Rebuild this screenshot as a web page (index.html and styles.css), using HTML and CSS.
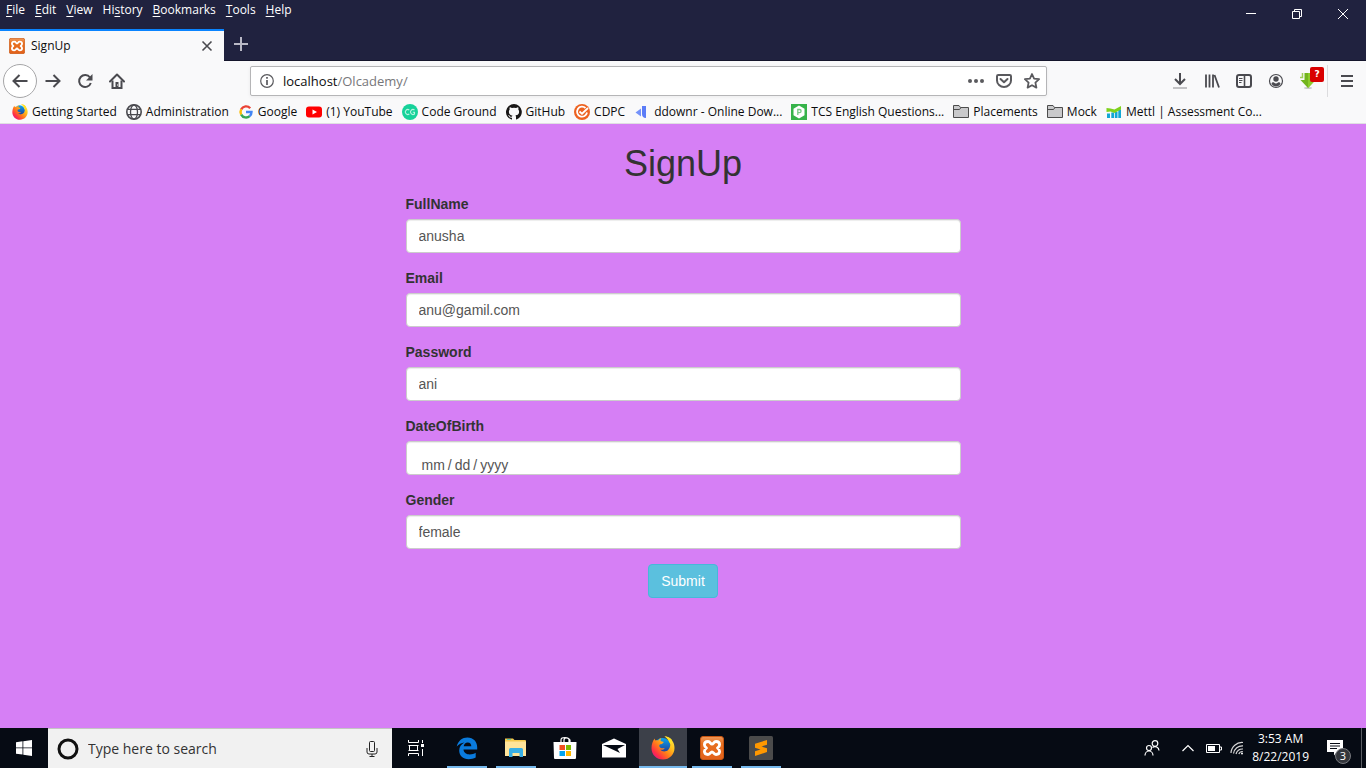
FILE: index.html
```html
<!DOCTYPE html>
<html lang="en">
<head>
<meta charset="utf-8">
<meta name="viewport" content="width=device-width, initial-scale=1">
<title>SignUp</title>
<link rel="stylesheet" href="styles.css">
</head>
<body class="desktop">
<svg class="defs" width="0" height="0" aria-hidden="true">
  <defs>
    <linearGradient id="fire" x1="1" y1="0" x2="0.1" y2=".9"><stop offset="0" stop-color="#fff44f"/><stop offset=".35" stop-color="#ffc21c"/><stop offset=".62" stop-color="#ff7a1a"/><stop offset=".85" stop-color="#ff2f45"/><stop offset="1" stop-color="#e31587"/></linearGradient>
    <linearGradient id="globe" x1="0" y1="0" x2="0" y2="1"><stop offset="0" stop-color="#0aa5ee"/><stop offset="1" stop-color="#23308c"/></linearGradient>
    <linearGradient id="orange" x1="0" y1="0" x2="0" y2="1"><stop offset="0" stop-color="#f09a5c"/><stop offset=".3" stop-color="#e8701f"/><stop offset="1" stop-color="#e2611b"/></linearGradient>
    <symbol id="firefox" viewBox="0 0 24 24">
      <circle cx="11.500" cy="10" r="8" fill="url(#globe)"/>
      <path d="M13.500.5c3 1.200 4.600 3 5 5.100 1.300 2.600 1 6.400-1.400 8.400-2.400 2.200-6.300 1.800-7.900-.4 2 .6 3.500-.2 4.500-1.200-1.400-.3-2.900.4-4.300-.7-1.300-1-1.500-2.600-.6-3.300.8-.6 1.800-.2 2.400-.5.500-.9 1.400-1.300 1.600-1.900-.9-.6-2.400-.3-3.100-1-.2-1.200.1-2.200.8-3-1.700.4-2.700 1.500-3.300 2.400-1-.2-1.900-.2-2.700.1C3.900 3.900 3.700 3.100 3.700 2.500 1.600 4.900.5 8.600.5 12.200c0 6.500 5.100 11.300 11.500 11.300S23.500 18.600 23.500 12c0-3-.8-5.500-2.300-7.300C20.300 2.500 17 .5 13.500.5z" fill="url(#fire)"/>
      <path d="M13.500.5c3.500 2 4 5 6 7.500 1.200-1 1.700-2.200 1.700-3.300C20.300 2.500 17 .5 13.500.5z" fill="#ffe226"/>
    </symbol>
    <symbol id="xampp" viewBox="0 0 24 24">
      <rect x=".5" y=".5" width="23" height="23" rx="2.500" fill="url(#orange)" stroke="#c85511"/>
      <path d="M8 5.500c-2.300 0-3.600 1.200-3.600 3.200 0 1.500.9 2.300 2.100 3.300-1.200 1-2.100 1.800-2.100 3.300 0 2 1.300 3.200 3.600 3.200 2.400 0 2.500-2.700 4-2.700s1.600 2.700 4 2.700c2.300 0 3.600-1.200 3.600-3.200 0-1.500-.9-2.300-2.100-3.300 1.200-1 2.100-1.800 2.100-3.300 0-2-1.300-3.200-3.600-3.200-2.400 0-2.500 2.700-4 2.700S10.400 5.500 8 5.500z" fill="none" stroke="#fff" stroke-width="2.800" stroke-linejoin="round"/>
    </symbol>
    <symbol id="folder" viewBox="0 0 16 16"><path d="M.5 13.500v-12H6l1.500 2h8v10z" fill="#c9c9cb" stroke="#4c4c4c"/><path d="M.5 5.500h6l1.500-2" fill="none" stroke="#4c4c4c"/></symbol>
  </defs>
</svg>

<header class="browser">
  <div class="titlebar">
    <nav class="menu" aria-label="Menu bar">
      <button type="button"><u>F</u>ile</button>
      <button type="button"><u>E</u>dit</button>
      <button type="button"><u>V</u>iew</button>
      <button type="button">Hi<u>s</u>tory</button>
      <button type="button"><u>B</u>ookmarks</button>
      <button type="button"><u>T</u>ools</button>
      <button type="button"><u>H</u>elp</button>
    </nav>
    <div class="window-buttons">
      <button type="button" aria-label="Minimize"><svg width="12" height="12" viewBox="0 0 12 12"><path d="M1 5.500h10" stroke="#fff"/></svg></button>
      <button type="button" aria-label="Restore"><svg width="12" height="12" viewBox="0 0 12 12"><path d="M1.500 3.500h7v7h-7zM3.500 3V1.500h7v7H9" fill="none" stroke="#fff"/></svg></button>
      <button type="button" aria-label="Close window"><svg width="12" height="12" viewBox="0 0 12 12"><path d="M1 1l10 10M11 1L1 11" stroke="#fff"/></svg></button>
    </div>
  </div>

  <div class="tabs">
    <div class="tab">
      <svg width="16" height="16"><use href="#xampp"/></svg>
      <span class="tab-title">SignUp</span>
      <button type="button" aria-label="Close tab"><svg width="12" height="12" viewBox="0 0 12 12"><path d="M1.500 1.500l9 9M10.500 1.500l-9 9" stroke="#4a4a4f" stroke-width="1.600"/></svg></button>
    </div>
    <button class="new-tab" type="button" aria-label="New tab"><svg width="14" height="14" viewBox="0 0 14 14"><path d="M7 0v14M0 7h14" stroke="#b9b9c6" stroke-width="2"/></svg></button>
  </div>

  <div class="toolbar">
    <div class="nav-buttons">
      <button class="back" type="button" aria-label="Back"><svg width="16" height="16" viewBox="0 0 16 16"><path d="M15.500 8H1.500M7.500 2l-6 6 6 6" fill="none" stroke="#4a4a4f" stroke-width="2"/></svg></button>
      <button type="button" aria-label="Forward"><svg width="16" height="16" viewBox="0 0 16 16"><path d="M.5 8h14M8.500 2l6 6-6 6" fill="none" stroke="#4a4a4f" stroke-width="2"/></svg></button>
      <button type="button" aria-label="Reload"><svg width="16" height="16" viewBox="0 0 16 16"><path d="M13 4.500A6 6 0 1 0 13.800 10" fill="none" stroke="#4a4a4f" stroke-width="2"/><path d="M15.500 1v6.500H9z" fill="#4a4a4f"/></svg></button>
      <button type="button" aria-label="Home"><svg width="16" height="16" viewBox="0 0 16 16"><path d="M1 8.500l7-7 7 7" fill="none" stroke="#4a4a4f" stroke-width="2" stroke-linejoin="round" stroke-linecap="round"/><path d="M3.500 7.500V15h9V7.500" fill="none" stroke="#4a4a4f" stroke-width="2"/><path d="M6.500 9h3v6h-3z" fill="#4a4a4f"/><path d="M8 11.500h1v1H8z" fill="#fff"/></svg></button>
    </div>
    <div class="address">
      <svg width="14" height="14" viewBox="0 0 14 14"><circle cx="7" cy="7" r="6.300" fill="none" stroke="#5a5a5e" stroke-width="1.200"/><path d="M7 3v1.800M7 6v5" stroke="#5a5a5e" stroke-width="1.700"/></svg>
      <a class="url" href="#">localhost<span>/Olcademy/</span></a>
      <button type="button" aria-label="Page actions"><svg width="16" height="16" viewBox="0 0 16 16" fill="#5a5a5e"><circle cx="2" cy="8" r="2"/><circle cx="8" cy="8" r="2"/><circle cx="14" cy="8" r="2"/></svg></button>
      <button type="button" aria-label="Save to Pocket"><svg width="16" height="16" viewBox="0 0 16 16" fill="none" stroke="#5a5a5e" stroke-width="2"><path d="M1 3.300Q1 2 2.300 2h11.400Q15 2 15 3.300V7.500a7 6.500 0 0 1-14 0z"/><path d="M4.500 6L8 9.300 11.500 6" stroke-linecap="round" stroke-linejoin="round"/></svg></button>
      <button type="button" aria-label="Bookmark this page"><svg width="16" height="16" viewBox="0 0 16 16" fill="none" stroke="#5a5a5e" stroke-width="1.800" stroke-linejoin="round"><path d="M8 1l2.100 4.600 5 .6-3.700 3.400 1 5L8 12.200l-4.400 2.400 1-5L.9 6.200l5-.6z"/></svg></button>
    </div>
    <div class="tools">
      <button type="button" aria-label="Downloads"><svg width="16" height="16" viewBox="0 0 16 16" fill="none" stroke-width="2"><path d="M8 0v11M3 6l5 5 5-5" stroke="#4a4a4f"/><path d="M1 15h14" stroke="#c2c2c4"/></svg></button>
      <button type="button" aria-label="Library"><svg width="16" height="16" viewBox="0 0 16 16" fill="none" stroke="#4a4a4f"><path d="M2 1.500v13M5.500 1.500v13M9 1.500v13M10.500 2l4.500 12.500" stroke-width="1.800"/></svg></button>
      <button type="button" aria-label="Sidebars"><svg width="16" height="16" viewBox="0 0 16 16" fill="none" stroke="#4a4a4f"><rect x="1" y="2" width="14" height="12" rx="2" stroke-width="2"/><path d="M8.500 2v12" stroke-width="1.600"/><path d="M3 5.500h3.500M3 7.500h3.500M3 9.500h2.500"/></svg></button>
      <button type="button" aria-label="Account"><svg width="16" height="16" viewBox="0 0 16 16"><circle cx="8" cy="8" r="6.500" fill="none" stroke="#4a4a4f" stroke-width="1.200"/><circle cx="8" cy="6" r="2.700" fill="#4a4a4f"/><path d="M3.500 10.500c1 2.300 2.500 3 4.500 3s3.500-.7 4.500-3c-1-1.700-2-1-2.500-1a3 3 0 0 1-4 0c-.5 0-1.500-.7-2.500 1z" fill="#4a4a4f"/></svg></button>
      <button class="helper" type="button" aria-label="Download helper"><svg width="16" height="16" viewBox="0 0 16 16"><ellipse cx="8" cy="15" rx="4" ry="1" fill="#c9c9c9"/><path d="M4.500 0h7.500v7H15.500L8 15 .5 7h4z" fill="#73b51d"/><path d="M8 0h4v7h3.500L8 15z" fill="#8ccc2b"/><path d="M2.500 0v4.500H0" stroke="#9fce55" stroke-width="1.500" fill="none"/></svg><span class="alert">?</span></button>
      <button class="app-menu" type="button" aria-label="Open menu"><svg width="12" height="12" viewBox="0 0 12 12"><path d="M0 1h12M0 6h12M0 11h12" stroke="#4a4a4f" stroke-width="2"/></svg></button>
    </div>
  </div>

  <nav class="bookmarks" aria-label="Bookmarks">
    <a href="#"><svg width="16" height="16"><use href="#firefox"/></svg>Getting Started</a>
    <a href="#"><svg width="16" height="16" viewBox="0 0 16 16" fill="none" stroke="#4a4a4f" stroke-width="1.300"><circle cx="8" cy="8" r="7.200" stroke-width="1.600"/><ellipse cx="8" cy="8" rx="3.500" ry="7"/><path d="M1.500 5.300h13M1.500 10.700h13"/></svg>Administration</a>
    <a href="#"><svg width="16" height="16" viewBox="0 0 16 16" fill="none" stroke-width="2.400"><path d="M12.200 4.200A5.500 5.500 0 0 0 3.200 5.400" stroke="#ea4335"/><path d="M3.200 5.400a5.500 5.500 0 0 0 0 5.200" stroke="#fbbc05"/><path d="M3.200 10.600a5.500 5.500 0 0 0 8.500 1.500" stroke="#34a853"/><path d="M11.700 12.100A5.500 5.500 0 0 0 13.500 8H8" stroke="#4285f4"/></svg>Google</a>
    <a href="#"><svg width="16" height="16" viewBox="0 0 16 16"><rect x="0" y="2.500" width="16" height="11" rx="3" fill="#f00"/><path d="M6.500 5.500v5L11 8z" fill="#fff"/></svg>(1) YouTube</a>
    <a href="#"><svg width="16" height="16" viewBox="0 0 16 16"><circle cx="8" cy="8" r="8" fill="#16d29a"/><path d="M7.300 6A2.500 2.500 0 1 0 7.300 10M12.500 6A2.500 2.500 0 1 0 12.500 10V8.200H10.800" fill="none" stroke="#b8f5e0" stroke-width="1.100"/></svg>Code Ground</a>
    <a href="#"><svg width="16" height="16" viewBox="0 0 16 16"><path d="M8 0a8 8 0 0 0-2.500 15.600c.4.100.500-.2.500-.4v-1.500c-2.200.5-2.700-.9-2.700-.9-.4-.9-.9-1.200-.9-1.200-.7-.5.100-.5.100-.5.800.1 1.200.8 1.200.8.700 1.200 1.900.9 2.300.7.100-.5.300-.9.500-1.100-1.800-.2-3.600-.9-3.600-4 0-.9.300-1.600.8-2.100-.1-.200-.4-1 .1-2.100 0 0 .7-.2 2.200.8a7.700 7.700 0 0 1 4 0c1.500-1 2.200-.8 2.200-.8.400 1.100.2 1.900.1 2.100.5.600.8 1.300.8 2.100 0 3.100-1.900 3.700-3.700 3.900.3.300.6.800.6 1.500v2.200c0 .2.100.5.600.4A8 8 0 0 0 8 0z" fill="#191717"/></svg>GitHub</a>
    <a href="#"><svg width="16" height="16" viewBox="0 0 16 16"><circle cx="8" cy="8" r="8" fill="#ed6220"/><path d="M11.500 4A5 5 0 1 0 13 8.500" fill="none" stroke="#fff" stroke-width="1.800"/><path d="M5.500 7.500l2.500 2.200L14 4" fill="none" stroke="#fff" stroke-width="1.800"/></svg>CDPC</a>
    <a href="#"><svg width="16" height="16" viewBox="0 0 16 16"><path d="M8 2h4v12c-3 0-4-2-4-4z" fill="#5b7cf7"/><path d="M1.500 8.500L7 4.500v8z" fill="#7492fa"/></svg>ddownr - Online Dow...</a>
    <a href="#"><svg width="16" height="16" viewBox="0 0 16 16"><path d="M0 0h16v16H0z" fill="#36b34a"/><path d="M8 1.500l5.500 3.200v6.600L8 14.500l-5.500-3.200V4.700z" fill="#fff"/><path d="M6.800 11V5.500h1.700a1.500 1.500 0 0 1 0 3.200H7" fill="none" stroke="#77c984" stroke-width="1.300"/></svg>TCS English Questions...</a>
    <a href="#"><svg width="16" height="16"><use href="#folder"/></svg>Placements</a>
    <a href="#"><svg width="16" height="16"><use href="#folder"/></svg>Mock</a>
    <a href="#"><svg width="16" height="16" viewBox="0 0 16 16"><path d="M1 9.500h3V14H1zM5.300 8.500h2.900V14H5.300zM9 8h2.500v6H9zM12.300 5.500H15V14h-2.700z" fill="#12a7d4"/><path d="M.5 4l4 .5 4 1L15 2v3.500L8.500 9 4.500 7.500.5 8z" fill="#7fd11b"/></svg>Mettl | Assessment Co...</a>
  </nav>
</header>

<main class="page">
  <form class="signup">
    <h1>SignUp</h1>
    <div class="field"><label for="fullname">FullName</label><input id="fullname" type="text" value="anusha"></div>
    <div class="field"><label for="email">Email</label><input id="email" type="email" value="anu@gamil.com"></div>
    <div class="field"><label for="password">Password</label><input id="password" type="text" value="ani"></div>
    <div class="field"><label for="dob">DateOfBirth</label><input id="dob" class="date" type="date"></div>
    <div class="field"><label for="gender">Gender</label><input id="gender" type="text" value="female"></div>
    <button class="submit" type="submit">Submit</button>
  </form>
</main>

<footer class="taskbar">
  <button class="start" type="button" aria-label="Start"><svg width="16" height="16" viewBox="0 0 16 16" fill="#fff"><path d="M0 2.200L6.500 1.300V7.500H0zM7.300 1.200L16 0v7.500H7.300zM0 8.300h6.500v6.300L0 13.700zM7.300 8.300H16V16l-8.700-1.200z"/></svg></button>
  <div class="search">
    <svg width="24" height="24" viewBox="0 0 24 24"><circle cx="12" cy="12" r="9" fill="none" stroke="#111" stroke-width="3"/></svg>
    <input type="text" aria-label="Search" placeholder="Type here to search">
    <button type="button" aria-label="Voice search"><svg width="12" height="18" viewBox="0 0 12 18" fill="none" stroke="#222"><rect x="3.500" y="1.500" width="5" height="10" rx="1"/><path d="M1 8v4q0 2 2 2h6q2 0 2-2V8M6 14v3M3.500 16.500h5"/></svg></button>
  </div>
  <div class="apps">
    <button type="button" aria-label="Task view"><svg width="18" height="18" viewBox="0 0 18 18" fill="none" stroke="#fff"><path d="M1.500 1v2.500h10V1M2.500 6v6M10.500 6v6M1.500 6.500h10M1.500 11.500h10M1.500 17v-2.500h10V17M15.500 1v3M15.500 10v7"/><path d="M14 5h3v3h-3z" fill="#fff" stroke="none"/></svg></button>
    <button class="open" type="button" aria-label="Edge"><svg width="24" height="24" viewBox="0 0 24 24"><path d="M1.700 10.600C3 4.800 7.400 1.500 12.400 1.500c6 0 9.800 4.400 9.800 9.800v2.300H8.500c.3 3.500 3.200 4.900 6.200 4.900 2.400 0 4.400-.7 6-1.700v4.700c-2 1.200-4.500 1.700-7 1.700-5.800 0-9.500-3.700-9.500-8.600 0-3.700 2-6.700 5.200-8.200-3 .4-5.500 1.800-7.700 4.200zm7-.3h7.600c0-2.300-1.300-3.700-3.500-3.700-2.300 0-3.700 1.500-4.100 3.700z" fill="#0a7bdd"/></svg></button>
    <button class="open" type="button" aria-label="File Explorer"><svg width="24" height="24" viewBox="0 0 24 24"><path d="M1 2.500h8l1.500 1.500H21q1 0 1 1V20H1z" fill="#f5c84c"/><path d="M1 5.500h21V20H1z" fill="#ffe49a"/><path d="M3 3h4v1H3z" fill="#5cc8a8"/><path d="M5 21v-7.500Q5 12 6.500 12h11q1.500 0 1.500 1.500V21h-3.500v-4h-7v4z" fill="#38afe5"/></svg></button>
    <button type="button" aria-label="Store"><svg width="24" height="24" viewBox="0 0 24 24"><path d="M8 7V4q0-2.500 4-2.500T16 4v3M11 6V4q0-2 2.500-2T17 4v2" fill="none" stroke="#fff" stroke-width="1.200"/><path d="M.5 6h23l-.5 16q0 1-1 1H2q-1 0-1-1z" fill="#fff"/><path d="M6.500 9H12v5H6.500z" fill="#f25022"/><path d="M13 9h5v5h-5z" fill="#7fba00"/><path d="M6.500 15H12v5H6.500z" fill="#00a4ef"/><path d="M13 15h5v5h-5z" fill="#ffb900"/></svg></button>
    <button type="button" aria-label="Mail"><svg width="24" height="24" viewBox="0 0 24 24"><path d="M0 8l12-5.500L24 8v13.500H0z" fill="#fff"/><path d="M1 9h22l-7.500 4 2.500 4z" fill="#060b14"/></svg></button>
    <button class="open active" type="button" aria-label="Firefox"><svg width="24" height="24"><use href="#firefox"/></svg></button>
    <button class="open" type="button" aria-label="XAMPP"><svg width="24" height="24"><use href="#xampp"/></svg></button>
    <button class="open" type="button" aria-label="Sublime Text"><svg width="24" height="24" viewBox="0 0 24 24"><rect width="24" height="24" rx="1.500" fill="#4b4b4b"/><path d="M6 7.800l12-3.800v4.700l-5.500 1.800L18 12.300V16L6 20v-4.700l5.500-1.800L6 11.700z" fill="#ff9800"/></svg></button>
  </div>
  <div class="tray">
    <button type="button" aria-label="People"><svg width="16" height="16" viewBox="0 0 16 16" fill="none" stroke="#fff" stroke-width="1.200"><circle cx="5" cy="8" r="2.500"/><path d="M1 15.500a4 4.500 0 0 1 8 0"/><circle cx="11" cy="3.500" r="2.800"/><path d="M8.500 7.500a4 4 0 0 1 6.500 3"/></svg></button>
    <button class="chevron" type="button" aria-label="Show hidden icons"><svg width="12" height="8" viewBox="0 0 12 8"><path d="M.5 7L6 1.500 11.500 7" fill="none" stroke="#fff" stroke-width="1.200"/></svg></button>
    <svg width="16" height="16" viewBox="0 0 16 16"><path d="M.5 4.500h13v8H.5zM14 7h1.500v3H14" fill="none" stroke="#fff"/><path d="M2 6h7v5H2z" fill="#fff"/></svg>
    <svg width="14" height="14" viewBox="0 0 14 14" fill="none" stroke="#d8d8d8" stroke-width="1.200"><path d="M1 12A11 11 0 0 1 13 1.500M3.500 12.500A9 9 0 0 1 13 4.800M6 13a7 7 0 0 1 7-5M8.800 13a4 4 0 0 1 4-2.500"/><circle cx="12" cy="12.500" r="1" fill="#fff" stroke="none"/></svg>
    <time class="clock" datetime="2019-08-22T03:53"><span>3:53 AM</span><span>8/22/2019</span></time>
    <button class="notices" type="button" aria-label="Notifications"><svg width="16" height="16" viewBox="0 0 16 16"><path d="M0 0h16v12h-6l-3 3.500V12H0z" fill="#fff"/><path d="M3 3.500h10M3 6h10M3 8.500h7" stroke="#060b14"/></svg><span class="count">3</span></button>
    <span class="peek"></span>
  </div>
</footer>
</body>
</html>
```
FILE: styles.css
```css
* { box-sizing: border-box; }

.desktop {
  margin: 0;
  min-height: 100vh;
  display: flex;
  flex-direction: column;
  font: 12px/16px "Open Sans", "Noto Sans", sans-serif;
  color: #0c0c0d;
}

.defs { position: absolute; }

button {
  display: flex;
  align-items: center;
  justify-content: center;
  padding: 0;
  border: 0;
  background: none;
  font: inherit;
  color: inherit;
}

a { color: inherit; text-decoration: none; }
svg { flex: none; }

/* Browser chrome */
.titlebar {
  display: flex;
  justify-content: space-between;
  height: 29px;
  background: #20223f;
  color: #fff;
}

.menu { display: flex; align-items: flex-start; gap: 10px; padding: 2px 6px; }
.menu u { text-underline-offset: 2px; }
.menu button { display: block; }

.window-buttons { display: flex; }
.window-buttons button { width: 46px; height: 28px; }

.tabs { display: flex; height: 32px; background: #20223f; border-bottom: 1px solid #14152b; }

.tab {
  display: flex;
  align-items: center;
  gap: 6px;
  width: 224px;
  height: 32px;
  padding: 0 11px 0 9px;
  border-top: 2px solid #0a84ff;
  background: #f9f9fa;
}

.tab-title { flex: 1; }
.new-tab { width: 34px; height: 30px; }

.toolbar {
  display: flex;
  align-items: center;
  height: 40px;
  background: #f9f9fa;
}

.nav-buttons { display: flex; align-items: center; width: 250px; padding-left: 3px; }
.nav-buttons button { width: 32px; height: 32px; }
.nav-buttons .back { width: 34px; height: 34px; border: 1px solid #a6a6a8; border-radius: 50%; background: #fff; }

.address {
  display: flex;
  align-items: center;
  gap: 12px;
  flex: 1;
  height: 30px;
  padding: 0 6px 0 9px;
  border: 1px solid #b5b5b7;
  border-radius: 2px;
  background: #fff;
  box-shadow: 0 1px 4px rgba(0, 0, 0, .06);
}

.url { flex: 1; font-size: 13px; margin-left: -3px; }
.url span { color: #77777a; }

.tools { display: flex; align-items: center; justify-content: flex-end; width: 319px; }
.tools button { width: 32px; height: 32px; }
.tools .app-menu { width: 39px; border-left: 1px solid #dcdcde; }
.tools .helper { position: relative; width: 35px; padding-right: 4px; }

.alert {
  position: absolute;
  top: 2px;
  right: 3px;
  width: 14px;
  height: 15px;
  border-radius: 2px;
  background: #d90000;
  color: #fff;
  font: bold 9px/15px "DejaVu Sans", sans-serif;
}

.bookmarks {
  display: flex;
  align-items: center;
  gap: 9px;
  height: 23px;
  padding-left: 12px;
  border-bottom: 1px solid #e0dfe2;
  background: #f9f9fa;
  overflow: hidden;
}

.bookmarks a { display: flex; align-items: center; gap: 4px; white-space: nowrap; }

/* Sign-up page */
.page {
  flex: 1;
  padding: 20px 15px;
  background: #d67ff5;
  font: 14px/20px "Liberation Sans", Arial, sans-serif;
  color: #333;
}

.signup { max-width: 555px; margin: 0 auto; }
.signup h1 { margin: 0 0 10px; font-size: 36px; font-weight: 500; line-height: 40px; text-align: center; }

.field { margin-bottom: 15px; }
.field label { display: block; margin-bottom: 5px; font-weight: 700; }

.field input {
  display: block;
  width: 100%;
  height: 34px;
  padding: 6px 12px;
  border: 1px solid #ccc;
  border-radius: 4px;
  background: #fff;
  box-shadow: inset 0 1px 1px rgba(0, 0, 0, .075);
  font: inherit;
  color: #555;
}

.field .date { padding: 14px 14px 0; overflow: hidden; }
.date::-webkit-calendar-picker-indicator { display: none; }
.date::-webkit-datetime-edit-text { padding: 0 2px; }

.submit {
  margin: 0 auto;
  padding: 6px 12px;
  border: 1px solid #46b8da;
  border-radius: 4px;
  background: #5bc0de;
  color: #fff;
}

/* Taskbar */
.taskbar { display: flex; height: 40px; background: #060b14; color: #fff; }
.start { width: 48px; }

.search {
  display: flex;
  align-items: center;
  gap: 8px;
  width: 344px;
  padding: 0 14px 0 8px;
  border-top: 1px solid #c4c4c4;
  background: #f1f1f1;
}

.search input { flex: 1; min-width: 0; padding: 0; border: 0; background: none; font: 14px/20px "Open Sans", sans-serif; }
.search input::placeholder { color: #333; opacity: 1; }

.apps { display: flex; gap: 1px; }
.apps button { width: 48px; position: relative; }
.apps button:first-child { width: 50px; padding-right: 2px; }
.apps .active { background: #3c4049; }

.open::after {
  content: "";
  position: absolute;
  right: 4px;
  bottom: 0;
  left: 4px;
  height: 2px;
  background: #76b9ed;
}

.open.active::after { right: 0; left: 0; }

.tray { display: flex; align-items: center; margin-left: auto; gap: 8px; }
.tray .chevron { margin: 0 4px 0 14px; }
.clock { display: flex; flex-direction: column; align-items: center; line-height: 18px; }
.notices { position: relative; width: 36px; height: 40px; }

.count {
  position: absolute;
  right: 2px;
  bottom: 4px;
  width: 16px;
  height: 16px;
  border: 1px solid #77797e;
  border-radius: 50%;
  background: #33363c;
  font-size: 11px;
  line-height: 14px;
}

.peek { width: 5px; height: 40px; border-left: 1px solid #5a5d63; }
```
